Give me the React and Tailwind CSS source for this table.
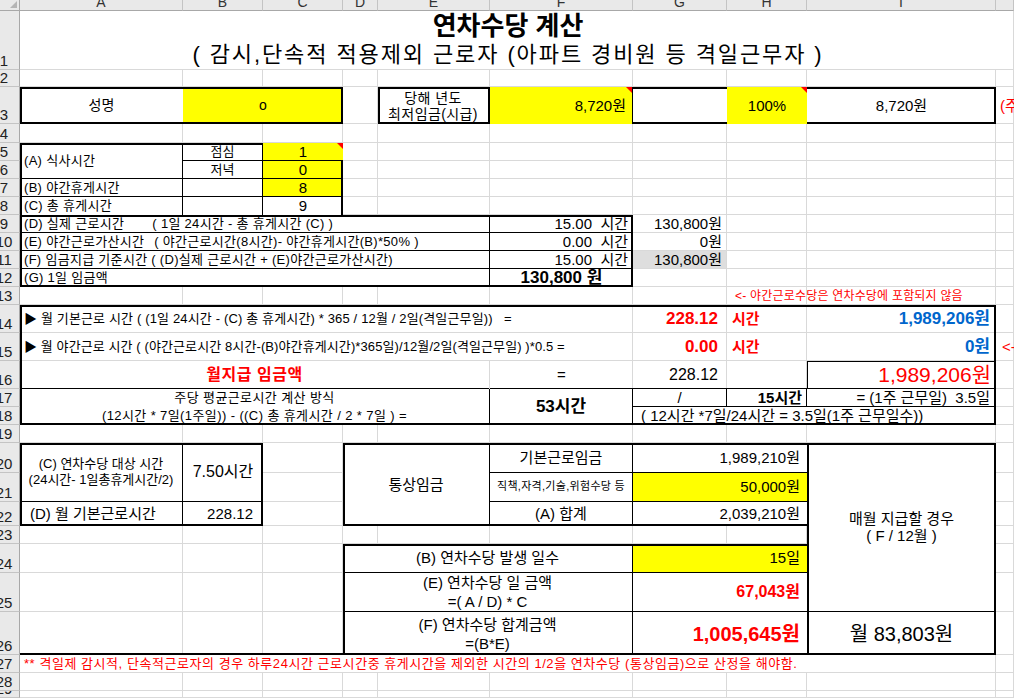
const colW = [20, 163, 80, 80, 35, 112, 143, 94, 80, 189, 18];
const rowH = [11, 59, 17, 37, 19, 18, 18, 18, 18, 18, 18, 18, 18, 18, 28, 28, 28, 18, 18, 18, 30, 29, 24, 18, 29, 39, 43, 18, 18, 7];
const letters = ["", "A", "B", "C", "D", "E", "F", "G", "H", "I", ""];

const GRID =
  "grid grid-cols-[20px_163px_80px_80px_35px_112px_143px_94px_80px_189px_18px] grid-rows-[11px_59px_17px_37px_19px_18px_18px_18px_18px_18px_18px_18px_18px_18px_28px_28px_28px_18px_18px_18px_30px_29px_24px_18px_29px_39px_43px_18px_18px_7px]";

const Tri = () => (
  <span className="absolute top-0 right-0 w-0 h-0 border-l-[6px] border-l-transparent border-t-[6px] border-t-[#ff0000]" />
);

function Sheet() {
  const cells = [];
  rowH.forEach((h, r) => {
    colW.forEach((w, c) => {
      const key = r + "-" + c;
      if (r === 0 && c === 0) {
        cells.push(
          <div key={key} className="bg-[#e9e9e9] border-r border-b border-[#a8a8a8] relative overflow-hidden">
            <svg className="absolute right-[2px] bottom-[2px]" width="7" height="7" viewBox="0 0 7 7">
              <path d="M7 0 L7 7 L0 7 Z" fill="#b5b5b5" />
            </svg>
          </div>
        );
      } else if (r === 0) {
        cells.push(
          <div key={key} className="bg-[#e9e9e9] border-r border-[#c4c4c4] border-b border-b-[#a8a8a8] overflow-hidden flex items-end justify-center pb-[1px] text-[14px] leading-none text-[#333]">
            {letters[c]}
          </div>
        );
      } else if (c === 0) {
        cells.push(
          <div key={key} className="bg-[#e9e9e9] border-r border-[#a8a8a8] border-b border-b-[#c4c4c4] overflow-hidden flex items-end">
            <div className="w-[34px] ml-[-13px] shrink-0 text-center text-[15px] leading-none pb-[1px] text-[#222]">{r}</div>
          </div>
        );
      } else {
        cells.push(<div key={key} className="border-r border-b border-[#d9d9d9]" />);
      }
    });
  });
  return <div className={GRID + " col-start-1 row-start-1"}>{cells}</div>;
}

export default function App() {
  return (
    <div className="grid w-[1014px] h-[698px] overflow-hidden bg-white text-black leading-[1.2] font-['Liberation_Sans','Noto_Sans_CJK_KR',sans-serif]">
      <Sheet />
      <div className={GRID + " col-start-1 row-start-1"}>
        {/* row 1 title */}
        <div className="col-[2/11] row-[2/3] bg-white mb-px flex flex-col items-center">
          <div className="h-[30px] flex items-center text-[26px] font-bold leading-none">연차수당 계산</div>
          <div className="h-[29px] flex items-center text-[22px] tracking-[1.9px] leading-none whitespace-pre">( 감시,단속적 적용제외 근로자 (아파트 경비원 등 격일근무자 )</div>
        </div>

        {/* row 3 */}
        <div className="col-[2/3] row-[4/5] bg-white flex items-center justify-center text-[14px]">성명</div>
        <div className="col-[3/5] row-[4/5] bg-[#ffff00] flex items-center justify-center text-[14px]">o</div>
        <div className="col-[2/5] row-[4/5] border-2 border-black" />
        <div className="col-[6/7] row-[4/5] bg-white border-r-2 border-black flex flex-col items-center justify-center text-[14px] leading-[16px] tracking-[0.4px]">
          <span>당해 년도</span>
          <span>최저임금(시급)</span>
        </div>
        <div className="col-[7/8] row-[4/5] relative bg-[#ffff00] border-r border-black flex items-center justify-end pr-[6px] text-[15px]">
          8,720원
          <Tri />
        </div>
        <div className="col-[8/9] row-[4/5] bg-white" />
        <div className="col-[9/10] row-[4/5] relative bg-[#ffff00] flex items-center justify-center text-[15px]">
          100%
          <Tri />
        </div>
        <div className="col-[10/11] row-[4/5] bg-white flex items-center justify-center text-[15px]">8,720원</div>
        <div className="col-[6/11] row-[4/5] border-2 border-black" />
        <div className="col-[11/12] row-[4/5] overflow-hidden flex items-center pl-[4px] text-[15px] text-[#ff0000] whitespace-nowrap">(주휴</div>

        {/* rows 5-8 */}
        <div className="col-[2/3] row-[6/8] bg-white border-r border-b border-black flex items-center pl-[4px] text-[13px] tracking-[0.3px]">(A) 식사시간</div>
        <div className="col-[3/4] row-[6/7] bg-white border-r border-b border-black flex items-center justify-center text-[13px]">점심</div>
        <div className="col-[4/5] row-[6/7] relative bg-[#ffff00] border-b border-black flex items-center justify-center text-[15px]">
          1
          <Tri />
        </div>
        <div className="col-[3/4] row-[7/8] bg-white border-r border-b border-black flex items-center justify-center text-[13px]">저녁</div>
        <div className="col-[4/5] row-[7/8] bg-[#ffff00] border-b border-black flex items-center justify-center text-[15px]">0</div>
        <div className="col-[2/3] row-[8/9] bg-white border-r border-b border-black flex items-center pl-[4px] text-[13px] tracking-[0.3px]">(B) 야간휴게시간</div>
        <div className="col-[3/4] row-[8/9] bg-white border-r border-b border-black" />
        <div className="col-[4/5] row-[8/9] bg-[#ffff00] border-b border-black flex items-center justify-center text-[15px]">8</div>
        <div className="col-[2/3] row-[9/10] bg-white border-r border-black flex items-center pl-[4px] text-[13px] tracking-[0.3px]">(C) 총 휴게시간</div>
        <div className="col-[3/4] row-[9/10] bg-white border-r border-black" />
        <div className="col-[4/5] row-[9/10] bg-white flex items-center justify-center text-[15px]">9</div>
        <div className="col-[2/5] row-[6/10] border-t-2 border-x-2 border-black" />

        {/* rows 9-12 */}
        <div className="col-[2/7] row-[10/11] bg-white border-r border-b border-black flex items-center pl-[4px] text-[13px] tracking-[0.3px] whitespace-pre">
          <span>(D) 실제 근로시간</span>
          <span className="ml-[28px]">( 1일 24시간 - 총 휴게시간 (C) )</span>
        </div>
        <div className="col-[7/8] row-[10/11] bg-white border-b border-black flex items-center justify-end pr-[5px] text-[15px] whitespace-pre">15.00  시간</div>
        <div className="col-[8/9] row-[10/11] flex items-center justify-end pr-[5px] text-[15px]">130,800원</div>

        <div className="col-[2/7] row-[11/12] bg-white border-r border-b border-black flex items-center pl-[4px] text-[13px] tracking-[0.3px] whitespace-pre">
          <span>(E) 야간근로가산시간</span>
          <span className="ml-[10px]">( 야간근로시간(8시간)- 야간휴게시간(B)*50% )</span>
        </div>
        <div className="col-[7/8] row-[11/12] bg-white border-b border-black flex items-center justify-end pr-[5px] text-[15px] whitespace-pre">0.00  시간</div>
        <div className="col-[8/9] row-[11/12] flex items-center justify-end pr-[5px] text-[15px]">0원</div>

        <div className="col-[2/7] row-[12/13] bg-white border-r border-b border-black flex items-center pl-[4px] text-[13px] tracking-[0.3px] whitespace-pre">(F) 임금지급 기준시간 ( (D)실제 근로시간 + (E)야간근로가산시간)</div>
        <div className="col-[7/8] row-[12/13] bg-white border-b border-black flex items-center justify-end pr-[5px] text-[15px] whitespace-pre">15.00  시간</div>
        <div className="col-[8/9] row-[12/13] bg-[#dedede] mr-px mb-px flex items-center justify-end pr-[4px] text-[15px]">130,800원</div>

        <div className="col-[2/7] row-[13/14] bg-white border-r border-black flex items-center pl-[4px] text-[13px] tracking-[0.3px]">(G) 1일 임금액</div>
        <div className="col-[7/8] row-[13/14] bg-white flex items-center justify-center text-[17px] font-bold whitespace-pre">130,800 원</div>
        <div className="col-[2/8] row-[10/14] border-2 border-black" />

        {/* row 13 note */}
        <div className="col-[9/11] row-[14/15] flex items-center pl-[8px] text-[12px] tracking-[0.2px] text-[#ff0000] whitespace-nowrap">
          {"<- 야간근로수당은 연차수당에 포함되지 않음"}
        </div>

        {/* rows 14-18 */}
        <div className="col-[2/8] row-[15/16] bg-white mr-px mb-px flex items-center pl-[4px] text-[13px] tracking-[0.15px] whitespace-pre">
          ▶ 월 기본근로 시간 ( (1일 24시간 - (C) 총 휴게시간) * 365 / 12월 / 2일(격일근무일))   =
        </div>
        <div className="col-[8/9] row-[15/16] flex items-center justify-end pr-[9px] text-[17px] font-bold text-[#ff0000]">228.12</div>
        <div className="col-[9/10] row-[15/16] flex items-center pl-[5px] text-[15px] font-bold text-[#ff0000]">시간</div>
        <div className="col-[10/11] row-[15/16] flex items-center justify-end pr-[6px] text-[17px] font-bold text-[#0066cc]">1,989,206원</div>

        <div className="col-[2/8] row-[16/17] bg-white mr-px mb-px flex items-center pl-[4px] text-[13px] tracking-[0.1px] whitespace-pre">
          ▶ 월 야간근로 시간 ( (야간근로시간 8시간-(B)야간휴게시간)*365일)/12월/2일(격일근무일) )*0.5 =
        </div>
        <div className="col-[8/9] row-[16/17] flex items-center justify-end pr-[9px] text-[17px] font-bold text-[#ff0000]">0.00</div>
        <div className="col-[9/10] row-[16/17] flex items-center pl-[5px] text-[15px] font-bold text-[#ff0000]">시간</div>
        <div className="col-[10/11] row-[16/17] flex items-center justify-end pr-[6px] text-[17px] font-bold text-[#0066cc]">0원</div>
        <div className="col-[11/12] row-[16/17] overflow-hidden flex items-center pl-[6px] text-[15px] text-[#ff0000] whitespace-nowrap">{"<-"}</div>

        <div className="col-[2/7] row-[17/18] bg-white mr-px border-b border-black flex items-center justify-center text-[16px] font-bold tracking-[0.5px] text-[#ff0000]">월지급 임금액</div>
        <div className="col-[7/8] row-[17/18] border-b border-black flex items-center justify-center text-[15px]">=</div>
        <div className="col-[8/9] row-[17/18] border-b border-black flex items-center justify-end pr-[9px] text-[16px]">228.12</div>
        <div className="col-[9/10] row-[17/18] border-b border-black" />
        <div className="col-[10/11] row-[17/18] bg-white border-l border-t border-b border-black flex items-center justify-end pr-[5px] text-[21px] text-[#ff0000]">1,989,206원</div>

        <div className="col-[2/7] row-[18/20] bg-white border-r border-black flex flex-col items-center justify-center text-[13px] leading-[18px] tracking-[0.4px] whitespace-pre">
          <span>주당 평균근로시간 계산 방식</span>
          <span>(12시간 * 7일(1주일)) - ((C) 총 휴게시간 / 2 * 7일 ) =</span>
        </div>
        <div className="col-[7/8] row-[18/20] bg-white border-r border-black flex items-center justify-center text-[17px] font-bold">53시간</div>
        <div className="col-[8/9] row-[18/19] bg-white border-r border-b border-black flex items-center justify-center text-[15px]">/</div>
        <div className="col-[9/10] row-[18/19] bg-white border-r border-b border-black flex items-center justify-end pr-[4px] text-[15px] font-bold">15시간</div>
        <div className="col-[10/11] row-[18/19] bg-white border-b border-black flex items-center justify-end pr-[6px] text-[15px] whitespace-pre">= (1주 근무일)  3.5일</div>
        <div className="col-[8/11] row-[19/20] bg-white flex items-center pl-[8px] text-[15px] whitespace-pre">( 12시간 *7일/24시간 = 3.5일(1주 근무일수))</div>
        <div className="col-[2/11] row-[15/20] border-2 border-black" />

        {/* rows 20-22 left */}
        <div className="col-[2/3] row-[21/23] bg-white border-r border-b border-black flex flex-col items-center justify-center text-[13px] leading-[16px] whitespace-pre">
          <span>(C) 연차수당 대상 시간</span>
          <span>(24시간- 1일총휴게시간/2)</span>
        </div>
        <div className="col-[3/4] row-[21/23] bg-white border-b border-black flex items-center justify-center text-[16px]">7.50시간</div>
        <div className="col-[2/3] row-[23/24] bg-white border-r border-black flex items-center pl-[10px] text-[15px]">(D) 월 기본근로시간</div>
        <div className="col-[3/4] row-[23/24] bg-white flex items-center justify-end pr-[10px] text-[15px]">228.12</div>
        <div className="col-[2/4] row-[21/24] border-2 border-black" />

        {/* rows 20-22 middle */}
        <div className="col-[5/7] row-[21/24] bg-white border-r border-black flex items-center justify-center text-[15px]">통상임금</div>
        <div className="col-[7/8] row-[21/22] bg-white border-r border-b border-black flex items-center justify-center text-[15px]">기본근로임금</div>
        <div className="col-[7/8] row-[22/23] bg-white border-r border-b border-black flex items-center justify-center text-[11px] tracking-[0.3px] whitespace-nowrap">직책,자격,기술,위험수당 등</div>
        <div className="col-[7/8] row-[23/24] bg-white border-r border-black flex items-center justify-center text-[15px]">(A) 합계</div>
        <div className="col-[8/10] row-[21/22] bg-white border-b border-black flex items-center justify-end pr-[7px] text-[15px]">1,989,210원</div>
        <div className="col-[8/10] row-[22/23] bg-[#ffff00] border-b border-black flex items-center justify-end pr-[7px] text-[15px]">50,000원</div>
        <div className="col-[8/10] row-[23/24] bg-white flex items-center justify-end pr-[7px] text-[15px]">2,039,210원</div>
        <div className="col-[5/10] row-[21/24] border-y-2 border-l-2 border-black" />

        {/* rows 24-26 lower */}
        <div className="col-[5/8] row-[25/26] bg-white border-r border-b border-black flex items-center justify-center text-[15px]">(B) 연차수당 발생 일수</div>
        <div className="col-[8/10] row-[25/26] bg-[#ffff00] border-b border-black flex items-center justify-end pr-[7px] text-[15px]">15일</div>
        <div className="col-[5/8] row-[26/27] bg-white border-r border-b border-black flex flex-col items-center justify-center text-[15px] leading-[19px] whitespace-pre">
          <span>(E) 연차수당 일 금액</span>
          <span>=( A / D) * C</span>
        </div>
        <div className="col-[8/10] row-[26/27] bg-white border-b border-black flex items-center justify-end pr-[7px] text-[16px] font-bold text-[#ff0000]">67,043원</div>
        <div className="col-[5/8] row-[27/28] bg-white border-r border-black flex flex-col items-center justify-center text-[15px] leading-[19px]">
          <span>(F) 연차수당 합계금액</span>
          <span>=(B*E)</span>
        </div>
        <div className="col-[8/10] row-[27/28] bg-white flex items-center justify-end pr-[7px] text-[20px] font-bold text-[#ff0000]">1,005,645원</div>
        <div className="col-[5/10] row-[25/28] border-y-2 border-l-2 border-black" />

        {/* right box */}
        <div className="col-[10/11] row-[21/27] bg-white border-b border-black flex flex-col items-center justify-center text-[15px] leading-[17px] whitespace-pre">
          <span>매월 지급할 경우</span>
          <span>( F / 12월 )</span>
        </div>
        <div className="col-[10/11] row-[27/28] bg-white flex items-center justify-center text-[20px]">월 83,803원</div>
        <div className="col-[10/11] row-[21/28] border-2 border-black" />

        {/* row 27 note */}
        <div className="col-[2/5] row-[27/28] border-b-2 border-black" />
        <div className="col-[2/11] row-[28/29] bg-white mr-px mb-px flex items-center pl-[4px] text-[13px] tracking-[0.55px] text-[#ff0000] whitespace-nowrap">
          ** 격일제 감시적, 단속적근로자의 경우 하루24시간 근로시간중 휴게시간을 제외한 시간의 1/2을 연차수당 (통상임금)으로 산정을 해야함.
        </div>
      </div>
    </div>
  );
}
